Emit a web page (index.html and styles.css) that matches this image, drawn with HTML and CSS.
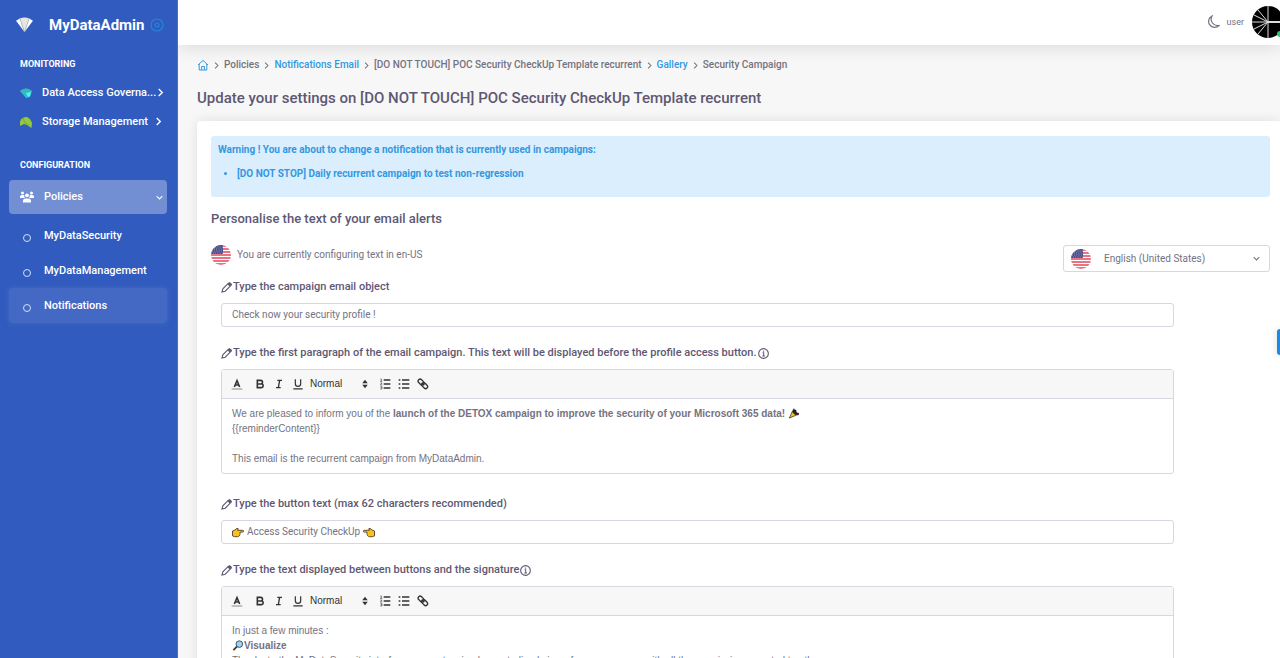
FILE: index.html
```
<!DOCTYPE html>
<html lang="en">
<head>
  <meta charset="UTF-8">
  <meta name="viewport" content="width=device-width, initial-scale=1.0">
  <title>MyDataAdmin | Notifications</title>
  <link rel="stylesheet" href="styles.css">
</head>
<body>
  <!-- shared icons -->
  <svg class="sprite" aria-hidden="true">
    <symbol id="chevron" viewBox="0 0 10 10"><path d="M3 1l4 4-4 4" fill="none" stroke="currentColor" stroke-width="1.5"/></symbol>
    <symbol id="chevron-down" viewBox="0 0 10 10"><path d="M1 3l4 4 4-4" fill="none" stroke="currentColor" stroke-width="1.5"/></symbol>
    <symbol id="pencil" viewBox="0 0 12 12"><path d="M1 11l1-3.600L8.200 1.200a1.300 1.300 0 0 1 1.900 0l.7.7a1.300 1.300 0 0 1 0 1.900L4.600 10z" fill="none" stroke="currentColor" stroke-width="1.200"/><path d="M7 2.400L8.300 1.100a1.400 1.400 0 0 1 2 0l.6.6a1.400 1.400 0 0 1 0 2L9.600 5z" fill="currentColor"/></symbol>
    <symbol id="info" viewBox="0 0 12 12"><circle cx="6" cy="6" r="5.300" fill="none" stroke="currentColor" stroke-width="1.200"/><path d="M5 5.300h1.200v3.200M4.700 8.600h2.900" fill="none" stroke="currentColor" stroke-width="1.100"/><circle cx="6" cy="3.400" r=".8" fill="currentColor"/></symbol>
    <symbol id="flag-us" viewBox="0 0 20 20">
      <clipPath id="round"><circle cx="10" cy="10" r="10"/></clipPath>
      <g clip-path="url(#round)">
        <rect width="20" height="20" fill="#fff"/>
        <path d="M0 1h20M0 4h20M0 7h20M0 10h20M0 13h20M0 16h20M0 19h20" stroke="#e0465b" stroke-width="1.600"/>
        <rect width="12" height="9" fill="#464a86"/>
        <path d="M2 2h10M3 4h9M1 6h11M2 8h10" stroke="#b9bbd6" stroke-width=".8" stroke-dasharray="1 1.200"/>
      </g>
    </symbol>
    <symbol id="color" viewBox="0 0 18 18"><path d="M1 16.500h16" stroke="#888" stroke-width="1.500"/><path d="M5 13.500L9 4l4 9.500M6.500 10.500h5" fill="none" stroke="currentColor" stroke-width="2.400"/></symbol>
    <symbol id="bold" viewBox="0 0 18 18"><path d="M5 3.500h5a2.700 2.700 0 0 1 0 5.500H5zM5 9h6a2.700 2.700 0 0 1 0 5.500H5z" fill="none" stroke="currentColor" stroke-width="2.400"/></symbol>
    <symbol id="italic" viewBox="0 0 18 18"><path d="M6.500 3.500h7M4.500 14.500h7M8 14.500l2-11" fill="none" stroke="currentColor" stroke-width="2"/></symbol>
    <symbol id="underline" viewBox="0 0 18 18"><path d="M5 2v6.500a4 4 0 0 0 8 0V2M2 16.200h14" fill="none" stroke="currentColor" stroke-width="1.800"/></symbol>
    <symbol id="sorter" viewBox="0 0 18 18"><path d="M4 7.500l5-6 5 6zM4 10.500l5 6 5-6z" fill="currentColor"/></symbol>
    <symbol id="ordered" viewBox="0 0 18 18"><path d="M7 3h10M7 9h10M7 15h10" stroke="currentColor" stroke-width="2"/><path d="M2 1.500h1.500v3.500M1.500 5h3.500M2 7.500h2.500L2 10.500h3M2 13h2.500v3.500H2M2.500 14.700h2" fill="none" stroke="currentColor" stroke-width=".9"/></symbol>
    <symbol id="bullets" viewBox="0 0 18 18"><path d="M6 3h11M6 9h11M6 15h11M1 3h2.500M1 9h2.500M1 15h2.500" stroke="currentColor" stroke-width="2"/></symbol>
    <symbol id="link" viewBox="0 0 18 18"><g fill="none" stroke="currentColor" stroke-width="2"><rect x="1" y="3.500" width="10" height="6" rx="3" transform="rotate(45 6.500 6.500)"/><rect x="6.500" y="8.500" width="10" height="6" rx="3" transform="rotate(45 11.500 11.500)"/><path d="M7 7l4 4"/></g></symbol>
    <symbol id="hand" viewBox="0 0 12 10"><path d="M.5 3.500L3 2.500 5 .8l1.300.5-.8 1.500h5.200a.8.8 0 0 1 0 1.800H8v1.200c.5.600.2 1.200-.3 1.500 0 .8-.4 1.100-.8 1.300-.3.500-.8.600-1.400.6H2.500L.5 8.400z" fill="#fcc21b" stroke="#3a2f14" stroke-width=".8"/></symbol>
  </svg>

  <aside class="sidebar">
    <div class="brand">
      <svg class="logo" viewBox="0 0 18 17"><path d="M0 4l4-2.500L9 16z" fill="#fff"/><path d="M4 1.500Q9-.5 14 1.500L9 16z" fill="#e6e6e6"/><path d="M14 1.500L18 4 9 16z" fill="#fff"/><path d="M4 1.500L9 16l5-14.500" fill="none" stroke="#aaa" stroke-width=".6"/></svg>
      <span>MyDataAdmin</span>
      <button type="button" class="pin" aria-label="Pin menu"><svg viewBox="0 0 14 14"><g fill="none" stroke="currentColor" stroke-width="1.200"><circle cx="7" cy="7" r="6"/><circle cx="7" cy="7" r="2"/></g></svg></button>
    </div>
    <nav>
      <h2>MONITORING</h2>
      <a href="#" class="item">
        <svg class="icon" viewBox="0 0 12 12"><path d="M0 4Q6-1 12 4L10 10 6 11z" fill="#22c3cf"/><path d="M0 4Q6-1 12 4L6 6z" fill="#3fb5b0"/><path d="M6 6l5-1-1 4-2 1z" fill="#5df0f0"/></svg>
        <span>Data Access Governa...</span>
        <svg class="arrow"><use href="#chevron"/></svg>
      </a>
      <a href="#" class="item">
        <svg class="icon" viewBox="0 0 12 12"><path d="M0 6Q1 1 7 1q4 2 5 6l-.5 5L7 9 4 8 0 10z" fill="#95c93d"/><path d="M3 2l2 5 4 2" fill="none" stroke="#6ea32c" stroke-width=".7"/></svg>
        <span>Storage Management</span>
        <svg class="arrow"><use href="#chevron"/></svg>
      </a>
      <h2>CONFIGURATION</h2>
      <a href="#" class="item open">
        <svg class="people" viewBox="0 0 14 12" fill="#fff"><circle cx="2.500" cy="2" r="1.500"/><circle cx="11.500" cy="2" r="1.500"/><circle cx="7" cy="4.300" r="1.900"/><path d="M0 7V5.500Q0 4 2 4h2.200Q4 6 5 7zM14 7V5.500Q14 4 12 4H9.800Q10 6 9 7zM3 11.500V10q0-2.500 2.500-2.500h3Q11 7.500 11 10v1.500z"/></svg>
        <span>Policies</span>
        <svg class="arrow"><use href="#chevron-down"/></svg>
      </a>
      <a href="#" class="sub"><i></i>MyDataSecurity</a>
      <a href="#" class="sub"><i></i>MyDataManagement</a>
      <a href="#" class="sub active"><i></i>Notifications</a>
    </nav>
  </aside>

  <div class="page">
    <header>
      <button type="button" class="moon" aria-label="Dark mode"><svg viewBox="0 0 14 14"><path d="M6 1a6 6 0 1 0 7 9.500A6.500 6.500 0 0 1 6 1z" fill="none" stroke="currentColor" stroke-width="1.200"/></svg></button>
      <span class="user">user</span>
      <svg class="avatar" viewBox="0 0 32 32">
        <circle cx="16" cy="16" r="16" fill="#000"/>
        <path d="M16 0v32M16 16L0 16M16 16L2 9M16 16L6 4M16 16L2 23M16 16L6 28" stroke="#ddd" stroke-width="1"/>
        <path d="M16 16h16" stroke="#ddd" stroke-width="2"/>
        <circle cx="28" cy="28" r="3" fill="#28c76f"/>
      </svg>
    </header>
    <main>
      <nav class="breadcrumb" aria-label="Breadcrumb">
        <a href="#" aria-label="Home"><svg class="home" viewBox="0 0 12 12"><path d="M1 6l5-4.600L11 6M2.200 5v6h7.600V5M4.600 11V7.500h2.800V11" fill="none" stroke="currentColor"/></svg></a>
        <svg class="sep"><use href="#chevron"/></svg>
        <span>Policies</span>
        <svg class="sep"><use href="#chevron"/></svg>
        <a href="#">Notifications Email</a>
        <svg class="sep"><use href="#chevron"/></svg>
        <span>[DO NOT TOUCH] POC Security CheckUp Template recurrent</span>
        <svg class="sep"><use href="#chevron"/></svg>
        <a href="#">Gallery</a>
        <svg class="sep"><use href="#chevron"/></svg>
        <span>Security Campaign</span>
      </nav>
      <h1>Update your settings on [DO NOT TOUCH] POC Security CheckUp Template recurrent</h1>

      <section class="card">
        <div class="alert" role="alert">
          <p>Warning ! You are about to change a notification that is currently used in campaigns:</p>
          <ul><li>[DO NOT STOP] Daily recurrent campaign to test non-regression</li></ul>
        </div>
        <h3>Personalise the text of your email alerts</h3>
        <div class="language">
          <svg class="flag"><use href="#flag-us"/></svg>
          <label for="lang">You are currently configuring text in en-US</label>
          <div class="lang-select">
            <svg class="flag"><use href="#flag-us"/></svg>
            <select id="lang"><option>English (United States)</option></select>
            <svg class="arrow"><use href="#chevron-down"/></svg>
          </div>
        </div>

        <form>
          <label for="object"><svg><use href="#pencil"/></svg>Type the campaign email object</label>
          <div class="field"><input type="text" id="object" value="Check now your security profile !"></div>

          <label id="first-label"><svg><use href="#pencil"/></svg>Type the first paragraph of the email campaign. This text will be displayed before the profile access button.<svg><use href="#info"/></svg></label>
          <div class="editor">
            <div class="toolbar">
              <button type="button" class="color" aria-label="Color"><svg><use href="#color"/></svg></button>
              <button type="button" aria-label="Bold"><svg><use href="#bold"/></svg></button>
              <button type="button" aria-label="Italic"><svg><use href="#italic"/></svg></button>
              <button type="button" aria-label="Underline"><svg><use href="#underline"/></svg></button>
              <div class="size"><select aria-label="Text size"><option>Normal</option></select><svg><use href="#sorter"/></svg></div>
              <button type="button" aria-label="Numbered list"><svg><use href="#ordered"/></svg></button>
              <button type="button" aria-label="Bullet list"><svg><use href="#bullets"/></svg></button>
              <button type="button" aria-label="Link"><svg><use href="#link"/></svg></button>
            </div>
            <div class="content" contenteditable="true" role="textbox" aria-labelledby="first-label" spellcheck="false">
              <p>We are pleased to inform you of the <b>launch of the DETOX campaign to improve the security of your Microsoft 365 data!</b> <svg class="emoji" viewBox="0 0 12 12"><path d="M1 11l3-7 4 4z" fill="#fcc21b" stroke="#332a12" stroke-width=".8"/><path d="M4 4L5 1l3 1 1 3 2.500.500L11 8 8 8z" fill="#222"/><path d="M5 1l2 .5M8 4l1-1" stroke="#238a87"/><path d="M9 7l2.500-.5" stroke="#8e2626"/></svg></p>
              <p>{{reminderContent}}</p>
              <p><br></p>
              <p>This email is the recurrent campaign from MyDataAdmin.</p>
            </div>
          </div>

          <label for="button-text"><svg><use href="#pencil"/></svg>Type the button text (max 62 characters recommended)</label>
          <div class="field with-emoji">
            <svg class="emoji"><use href="#hand"/></svg>
            <input type="text" id="button-text" value="Access Security CheckUp">
            <svg class="emoji left"><use href="#hand"/></svg>
          </div>

          <label id="between-label"><svg><use href="#pencil"/></svg>Type the text displayed between buttons and the signature<svg><use href="#info"/></svg></label>
          <div class="editor">
            <div class="toolbar">
              <button type="button" class="color" aria-label="Color"><svg><use href="#color"/></svg></button>
              <button type="button" aria-label="Bold"><svg><use href="#bold"/></svg></button>
              <button type="button" aria-label="Italic"><svg><use href="#italic"/></svg></button>
              <button type="button" aria-label="Underline"><svg><use href="#underline"/></svg></button>
              <div class="size"><select aria-label="Text size"><option>Normal</option></select><svg><use href="#sorter"/></svg></div>
              <button type="button" aria-label="Numbered list"><svg><use href="#ordered"/></svg></button>
              <button type="button" aria-label="Bullet list"><svg><use href="#bullets"/></svg></button>
              <button type="button" aria-label="Link"><svg><use href="#link"/></svg></button>
            </div>
            <div class="content" contenteditable="true" role="textbox" aria-labelledby="between-label" spellcheck="false">
              <p>In just a few minutes :</p>
              <p><svg class="emoji" viewBox="0 0 12 12"><path d="M1 11l4-4" stroke="#3b3b3b" stroke-width="2"/><circle cx="7.500" cy="4.500" r="3.600" fill="#9cd3f5" stroke="#334a5c"/></svg><b>Visualize</b></p>
              <p>Thanks to the MyDataSecurity interface, you get a simple, centralized view of your resources with all the permissions granted to other users.</p>
            </div>
          </div>
        </form>
      </section>
    </main>
    <button type="button" class="help" aria-label="Help"></button>
  </div>
</body>
</html>
```

FILE: styles.css
```
*{
  margin: 0;
  padding: 0;
  box-sizing: border-box;
}
body{
  display: flex;
  height: 100vh;
  overflow: hidden;
  background-color: #f7f7f7;
  color: #75727f;
  font-family: Roboto, sans-serif;
  font-size: 10px;
  line-height: 14px;
}
a{
  color: #3498e0;
  text-decoration: none;
}
button, select, input{
  border: none;
  background: none;
  color: inherit;
  font: inherit;
  outline: none;
}
button{
  cursor: pointer;
}
select{
  appearance: none;
}
svg{
  display: block;
  flex: none;
}
.sprite{
  position: absolute;
  width: 0;
  height: 0;
}

/* sidebar */
.sidebar{
  width: 178px;
  flex: none;
  padding: 0 10px 0 9px;
  background-color: #315bbe;
  border-right: 1px solid #4a6fc8;
  color: white;
}
.brand{
  display: flex;
  align-items: center;
  height: 49px;
  padding-left: 7px;
  font-size: 15px;
  font-weight: 700;
}
.logo{
  width: 17px;
  height: 16px;
  margin-right: 16px;
}
.pin{
  margin-left: auto;
  margin-right: 3px;
  color: #2385dd;
}
.pin svg{
  width: 14px;
  height: 14px;
}
.sidebar h2{
  margin: 8px 0 7px 11px;
  font-size: 9px;
  font-weight: 700;
}
.item{
  display: flex;
  align-items: center;
  height: 29px;
  padding: 0 4px 0 11px;
  color: white;
  font-size: 11px;
  font-weight: 500;
  white-space: nowrap;
}
.item .icon{
  width: 12px;
  height: 12px;
  margin-right: 10px;
}
.item .arrow{
  width: 9px;
  height: 9px;
  margin-left: auto;
}
.item + h2{
  margin-top: 22px;
  margin-bottom: 8px;
}
.item.open{
  height: 34px;
  margin-bottom: 4px;
  background-color: #728fd3;
  border-radius: 4px;
}
.people{
  width: 14px;
  height: 12px;
  margin-right: 10px;
}
.item.open .arrow{
  width: 7px;
  height: 7px;
}
.sub{
  display: flex;
  align-items: center;
  height: 35px;
  padding-left: 14px;
  border-radius: 4px;
  color: white;
  font-size: 11px;
  font-weight: 500;
}
.sub i{
  width: 8px;
  height: 8px;
  margin: 4px 13px 0 0;
  border: 1px solid #d5def2;
  border-radius: 50%;
}
.sub.active{
  background-color: #4369c4;
  box-shadow: 0 0 6px #4369c4;
}

/* top bar */
.page{
  display: flex;
  flex-direction: column;
  flex: 1;
  min-width: 0;
  overflow: hidden;
}
header{
  display: flex;
  align-items: center;
  justify-content: flex-end;
  flex: none;
  height: 45px;
  padding-bottom: 2px;
  background-color: white;
  box-shadow: 0 0 20px rgba(0, 0, 0, 0.15);
  font-size: 9px;
}
.moon svg{
  width: 14px;
  height: 14px;
}
.user{
  margin: 0 8px 0 7px;
}
.avatar{
  width: 32px;
  height: 32px;
  margin-right: -4px;
}

/* content */
main{
  flex: 1;
  min-height: 0;
  padding: 13px 0 0 19px;
}
.breadcrumb{
  display: flex;
  align-items: center;
  height: 14px;
  font-weight: 500;
}
.home{
  width: 12px;
  height: 12px;
}
.sep{
  width: 7px;
  height: 7px;
  margin: 0 4px;
}
h1, h3, form label{
  color: #5e5873;
  font-weight: 500;
}
h1{
  margin-top: 16px;
  font-size: 15px;
  line-height: 20px;
}
.card{
  margin-top: 13px;
  padding: 15px 10px 15px 14px;
  background-color: white;
  border-radius: 4px 0 0 4px;
  box-shadow: 0 0 12px rgba(0, 0, 0, 0.1);
}
.alert{
  padding: 7px 7px 16px;
  background-color: #daeefe;
  border-radius: 3px;
  color: #3498e0;
  font-weight: 700;
}
.alert ul{
  margin: 10px 0 0 19px;
}
h3{
  margin: 14px 0;
  font-size: 13px;
  line-height: 16px;
}
.language{
  display: flex;
  align-items: flex-start;
  height: 27px;
  margin-top: 18px;
}
.flag{
  width: 20px;
  height: 20px;
}
.language label{
  margin: 3px auto 0 6px;
}
.lang-select{
  display: flex;
  align-items: center;
  width: 207px;
  height: 27px;
  padding: 0 9px 0 7px;
  border: 1px solid #d8d6de;
  border-radius: 3px;
}
.lang-select select{
  flex: 1;
  padding-left: 13px;
}
.lang-select .arrow{
  width: 7px;
  height: 7px;
}

/* form */
form{
  width: 90%;
  margin-left: 10px;
}
form label{
  display: flex;
  align-items: center;
  gap: 1px;
  height: 14px;
  margin-top: 8px;
  font-size: 11px;
}
form label svg{
  width: 11px;
  height: 11px;
}
.field{
  display: flex;
  align-items: center;
  height: 24px;
  margin: 9px 0 19px;
  padding: 0 10px;
  border: 1px solid #d8d6de;
  border-radius: 3px;
}
.field input{
  width: 100%;
}
.with-emoji input{
  width: auto;
  margin: 0 3px;
  field-sizing: content;
}
.emoji{
  width: 12px;
  height: 11px;
}
.emoji.left{
  transform: scaleX(-1);
}
.editor{
  margin: 9px 0 23px;
  border: 1px solid #d8d6de;
  border-radius: 3px;
  font-family: "Liberation Sans", Arial, sans-serif;
}
.toolbar{
  display: flex;
  align-items: center;
  height: 29px;
  padding-left: 5px;
  background-color: #f7f7f7;
  border-bottom: 1px solid #d8d6de;
  color: #333;
}
.toolbar button{
  display: flex;
  justify-content: center;
  width: 19px;
}
.toolbar .color{
  margin-right: 4px;
}
.toolbar svg{
  width: 12px;
  height: 12px;
}
.size{
  display: flex;
  align-items: center;
  width: 60px;
  margin: 0 5px 0 3px;
}
.size select{
  flex: 1;
}
.size svg{
  width: 10px;
  height: 10px;
}
.content{
  padding: 7px 10px;
  line-height: 15px;
  outline: none;
}
.content .emoji{
  display: inline-block;
  vertical-align: -2px;
}

/* tab stuck on the window's edge */
.help{
  position: fixed;
  top: 50%;
  right: 0;
  width: 3px;
  height: 26px;
  background-color: #1e88e5;
  border-radius: 3px 0 0 3px;
  box-shadow: 0 0 6px rgba(0, 0, 0, 0.2);
}
```
